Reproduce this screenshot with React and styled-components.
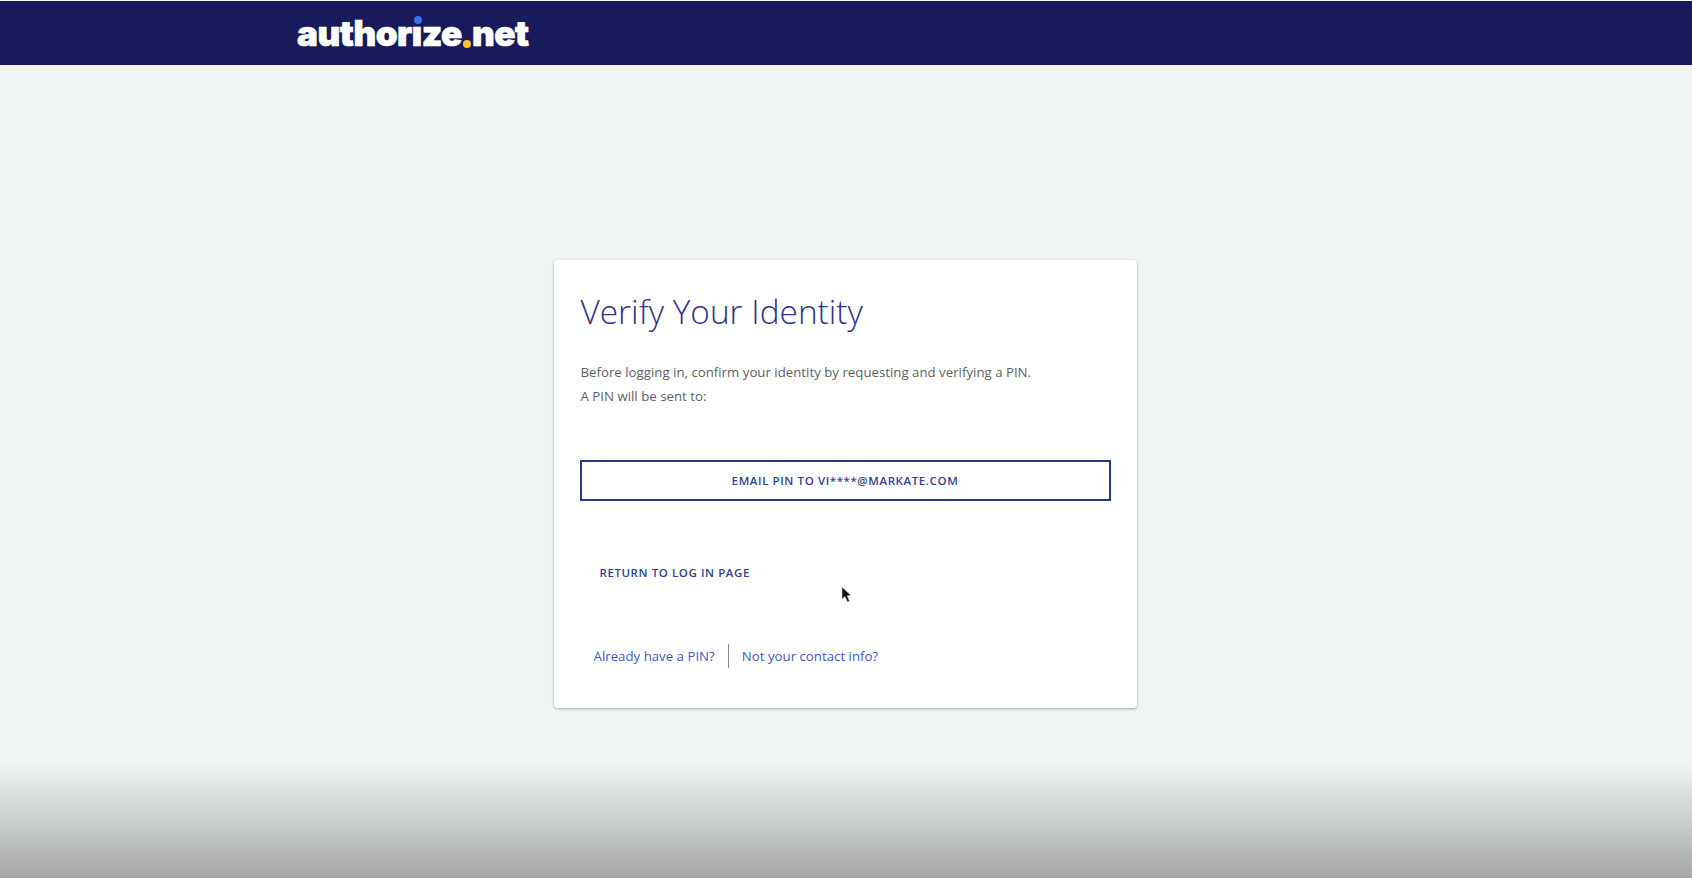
import React from "react";
import styled, { createGlobalStyle } from "styled-components";

const Global = createGlobalStyle`
  html, body { margin: 0; padding: 0; height: 100%; }
  body { font-family: "Open Sans", "Liberation Sans", sans-serif; overflow: hidden; }
  a { text-decoration: none; }
`;

const Page = styled.div`
  width: 1692px;
  height: 878px;
  position: relative;
  display: flex;
  flex-direction: column;
  background: linear-gradient(to bottom, #f0f4f5 0, #f0f4f5 764px, #e2e5e6 785px, #c9cccd 825px, #a3a5a6 878px);
`;

const Header = styled.header`
  height: 64px;
  margin-top: 1px;
  flex: none;
  background: #191a5b;
  display: flex;
  align-items: center;
  padding-left: 297px;
`;

const Logo = styled.div`
  position: relative;
  font-family: "Inter", "Liberation Sans", sans-serif;
  font-weight: 900;
  font-size: 35px;
  line-height: 34px;
  letter-spacing: -0.45px;
  color: #fff;
  -webkit-text-stroke: 0.7px #fff;
  display: flex;
`;

const LogoI = styled.span`
  position: relative;
`;

const BlueDot = styled.i`
  position: absolute;
  top: 0;
  left: 2px;
  width: 8px;
  height: 8px;
  border-radius: 50%;
  background: #3c6ff0;
  box-shadow: 0 0 0 1px #191a5b;
`;

const YellowDot = styled.i`
  align-self: flex-end;
  width: 8px;
  height: 8px;
  margin: 0 1px 2px 1px;
  border-radius: 50%;
  background: #fdc02f;
`;

const Main = styled.main`
  flex: 1;
  display: flex;
  justify-content: center;
  align-items: flex-start;
  padding: 195px 2px 0 0;
`;

const Card = styled.section`
  width: 583px;
  height: 448px;
  box-sizing: border-box;
  background: #fff;
  border-radius: 4px;
  box-shadow: 0 1px 3px rgba(0, 0, 0, 0.3);
  padding: 28px 26px 0;
  display: flex;
  flex-direction: column;
`;

const Title = styled.h1`
  margin: 0;
  padding-left: 1px;
  font-size: 33.4px;
  line-height: 46px;
  font-weight: 300;
  color: #2f3388;
`;

const Text = styled.p`
  margin: 26px 0 0;
  padding-left: 1px;
  font-size: 13.25px;
  line-height: 24px;
  color: #5d6064;
`;

const EmailButton = styled.button`
  margin-top: 52px;
  width: 100%;
  height: 41px;
  box-sizing: border-box;
  background: #fff;
  border: 2px solid #24388a;
  font-family: inherit;
  font-size: 11.5px;
  font-weight: 600;
  letter-spacing: 0.6px;
  color: #2f4193;
  text-transform: uppercase;
`;

const ReturnLink = styled.a`
  margin: 64px 0 0 20px;
  font-size: 11.5px;
  line-height: 16px;
  font-weight: 600;
  letter-spacing: 0.58px;
  color: #2f4193;
  text-transform: uppercase;
`;

const Links = styled.nav`
  margin: 63px 0 0 14px;
  display: flex;
  align-items: center;
`;

const HelpLink = styled.a`
  font-size: 13.25px;
  line-height: 24px;
  color: #4257c0;
`;

const Divider = styled.span`
  width: 1px;
  height: 24px;
  background: #85878a;
  margin: 0 13px;
`;

const Cursor = styled.svg`
  position: absolute;
  left: 841px;
  top: 586px;
`;

export default function App() {
  return (
    <>
      <Global />
      <Page>
        <Header>
          <Logo>
            author<LogoI>ı<BlueDot /></LogoI>ze<YellowDot />net
          </Logo>
        </Header>
        <Main>
          <Card>
            <Title>Verify Your Identity</Title>
            <Text>
              Before logging in, confirm your identity by requesting and verifying a PIN.
              <br />
              A PIN will be sent to:
            </Text>
            <EmailButton>Email PIN to vi****@markate.com</EmailButton>
            <ReturnLink href="#">Return to log in page</ReturnLink>
            <Links>
              <HelpLink href="#">Already have a PIN?</HelpLink>
              <Divider />
              <HelpLink href="#">Not your contact info?</HelpLink>
            </Links>
          </Card>
        </Main>
        <Cursor width="12" height="18" viewBox="0 0 12 18">
          <path d="M1 1 L1 13 L4 10.5 L6.5 16 L8.5 15 L6.2 9.8 L10 9.5 Z" fill="#111" stroke="#ccc" strokeWidth="0.6" />
        </Cursor>
      </Page>
    </>
  );
}
